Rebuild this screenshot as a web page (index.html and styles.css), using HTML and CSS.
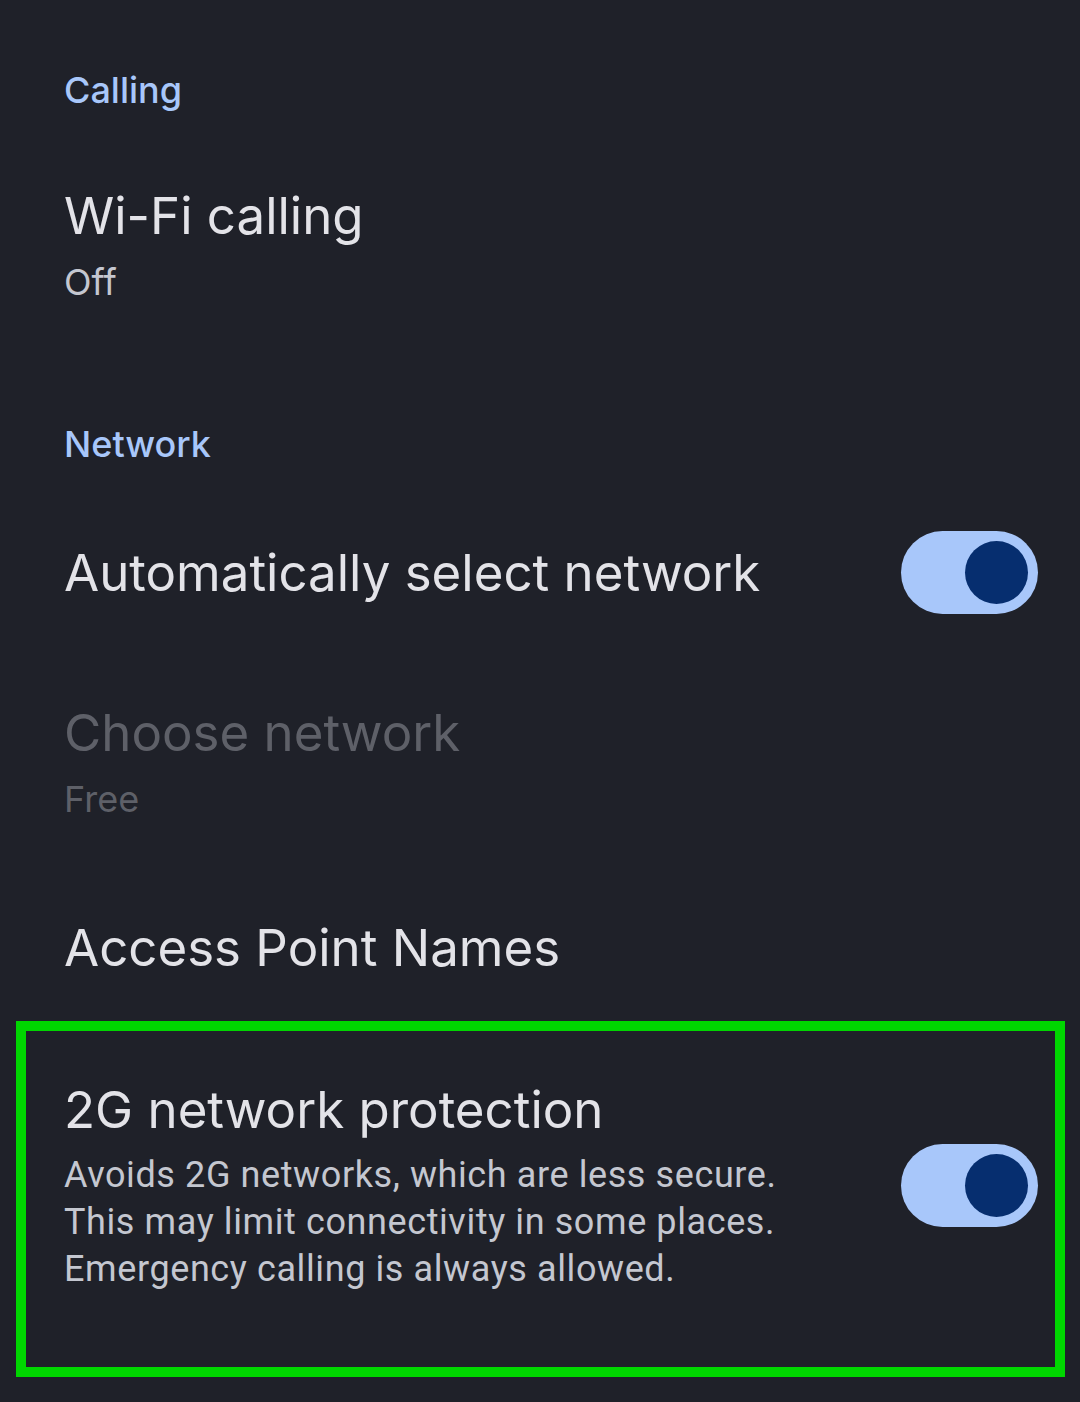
FILE: index.html
```html
<!DOCTYPE html>
<html lang="en">
<head>
    <meta charset="UTF-8">
    <meta name="viewport" content="width=device-width, initial-scale=1.0">
    <title>Mobile network</title>
    <link rel="stylesheet" href="styles.css">
</head>
<body>
    <div class="settings">
        <div class="category">Calling</div>

        <div class="item item-wifi">
            <div class="item-text">
                <div class="title">Wi-Fi calling</div>
                <div class="summary">Off</div>
            </div>
        </div>

        <div class="category category-network">Network</div>

        <div class="item item-auto">
            <div class="item-text">
                <div class="title">Automatically select network</div>
            </div>
            <div class="switch on"><span class="thumb"></span></div>
        </div>

        <div class="item item-choose disabled">
            <div class="item-text">
                <div class="title">Choose network</div>
                <div class="summary">Free</div>
            </div>
        </div>

        <div class="item item-apn">
            <div class="item-text">
                <div class="title">Access Point Names</div>
            </div>
        </div>

        <div class="item item-2g highlight">
            <div class="item-text">
                <div class="title">2G network protection</div>
                <div class="desc">Avoids 2G networks, which are less secure.<br>This may limit connectivity in some places.<br>Emergency calling is always allowed.</div>
            </div>
            <div class="switch on"><span class="thumb"></span></div>
        </div>
    </div>
</body>
</html>
```

FILE: styles.css
```css
body {
    margin: 0;
    background: #1f2129;
    font-family: Inter, "Open Sans", sans-serif;
    color: #e3e3e8;
}

.settings {
    padding-top: 60px;
    height: 1342px;
}

.category {
    padding-left: 64px;
    font-size: 36px;
    font-weight: 500;
    line-height: 60px;
    color: #a8c7fa;
}

.category-network {
    margin-top: 98px;
}

.item {
    display: flex;
    align-items: center;
    padding: 0 42px 0 64px;
}

.item-text {
    flex: 1;
}

.title {
    font-size: 51px;
    line-height: 64px;
    color: #e3e3e8;
}

.summary {
    font-size: 36px;
    line-height: 68px;
    color: #c4c7d0;
}

.item-wifi {
    margin-top: 64px;
}

.item-auto {
    margin-top: 57px;
}

.item-choose {
    margin-top: 87px;
}

.disabled .title,
.disabled .summary {
    color: #5e6068;
}

.item-apn {
    margin-top: 83px;
}

.highlight {
    margin: 41px 15px 0 16px;
    padding: 47px 17px 74px 38px;
    border: 10px solid #00d600;
}

.desc {
    margin-top: 10px;
    font-family: Roboto, sans-serif;
    font-size: 36px;
    letter-spacing: 0.6px;
    line-height: 47px;
    color: #c4c7d0;
}

.switch {
    display: flex;
    align-items: center;
    justify-content: flex-end;
    width: 137px;
    height: 83px;
    padding: 0 10px;
    box-sizing: border-box;
    border-radius: 42px;
    background: #a8c7fa;
    flex-shrink: 0;
}

.thumb {
    width: 63px;
    height: 63px;
    border-radius: 50%;
    background: #062e6f;
}
```
